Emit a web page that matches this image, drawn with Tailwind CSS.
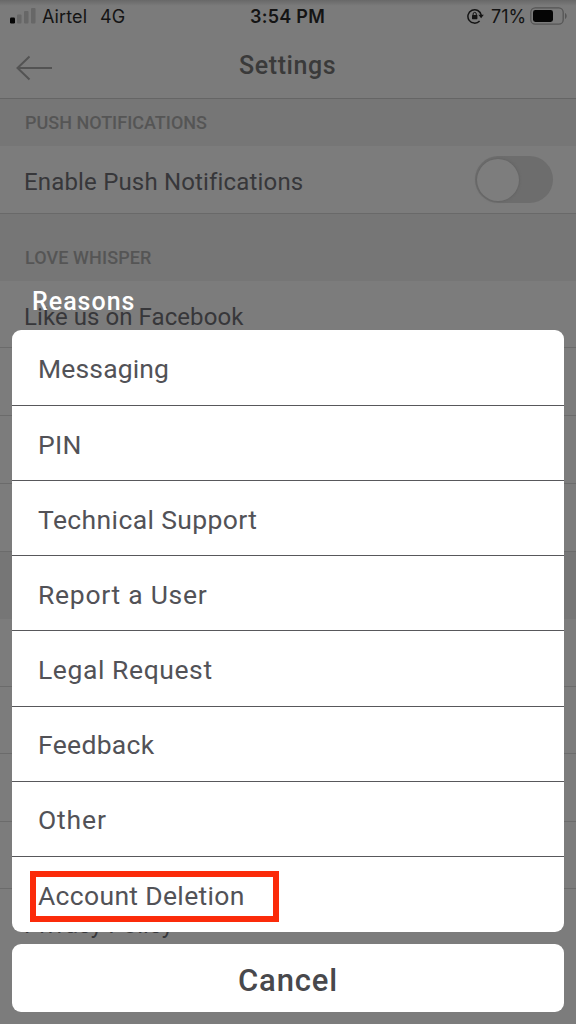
<!DOCTYPE html>
<html lang="en">
<head>
<meta charset="utf-8">
<meta name="viewport" content="width=device-width">
<title>Settings</title>
<script src="https://cdn.jsdelivr.net/npm/@tailwindcss/browser@4"></script>
</head>
<body class="overflow-hidden bg-[#7c7c7c]">
<div class="relative h-[1024px] w-[576px] overflow-hidden bg-[#7c7c7c] font-['Roboto',sans-serif] text-[#37373a]">
  <!-- Settings screen, dimmed -->
  <header class="h-[99px] border-b border-[#656565] bg-linear-to-b from-[#686868] to-[#7b7b7b] to-6%">
    <div class="flex h-8 items-center pl-[10px] pr-[9px] font-['Inter',sans-serif] text-[#141414]">
      <div class="flex w-[240px] items-center">
        <svg class="h-4 w-[26px]" viewBox="0 0 26 16"><rect x="0" y="9.500" width="5" height="6" rx="1.2" fill="#050505"/><g fill="#676767"><rect x="7" y="6.500" width="4.500" height="9" rx="1"/><rect x="14" y="3" width="4.500" height="12.500" rx="1"/><rect x="21" y="0" width="4.500" height="15.500" rx="1"/></g></svg>
        <span class="ml-[6px] text-[18px] tracking-[0.1px]">Airtel</span><span class="ml-[13px] text-[18px]">4G</span>
      </div>
      <span class="text-[18px] font-semibold tracking-[0.25px]">3:54 PM</span>
      <div class="ml-auto flex items-center">
        <svg class="h-4 w-[17px]" viewBox="0 0 17 16" fill="none"><path d="M12.600 12.900A6.700 6.700 0 1 1 14.200 7.200" stroke="#141414" stroke-width="1.500"/><path d="M11.400 6.700h5.400l-2.700 3.600z" fill="#141414"/><rect x="5" y="7" width="5.400" height="4.200" rx=".6" fill="#141414"/><path d="M6.100 7.400V6a1.600 1.600 0 0 1 3.200 0v1.400" stroke="#141414" stroke-width="1"/></svg>
        <span class="ml-[7px] text-[18px] tracking-[-0.1px]">71%</span>
        <svg class="ml-[4px] h-[18px] w-[37px]" viewBox="0 0 37 18" fill="none"><rect x=".8" y=".8" width="32.400" height="16.400" rx="4.500" stroke="#555" stroke-width="1.300"/><rect x="3" y="3" width="20" height="12" rx="2.400" fill="#050505"/><path d="M35 6c2.200.8 2.200 5.200 0 6z" fill="#555"/></svg>
      </div>
    </div>
    <div class="flex h-[66px] items-center pl-4">
      <svg class="mt-[5px] h-[26px] w-9" viewBox="0 0 36 26" fill="none" stroke="#535353" stroke-width="2"><path d="M36 13H1.500M13.500 1.500 1.500 13l12 11.500"/></svg>
      <h1 class="ml-[187px] pt-[2px] text-[25px] leading-8 font-medium tracking-[0.6px] text-[#3a3a3a]">Settings</h1>
    </div>
  </header>
  <h2 class="flex h-[47px] items-center bg-[#767676] pl-[25px] text-[18px] font-medium text-[#555]">PUSH NOTIFICATIONS</h2>
  <div class="flex h-[68px] items-center justify-between border-b border-[#696969] pr-[23px] pl-6">
    <span class="pt-[5px] text-[24px] tracking-[0.17px]">Enable Push Notifications</span>
    <div class="flex h-[47px] w-[78px] items-center rounded-full bg-[#6d6d6d] pl-[2px]"><div class="size-[42px] rounded-full bg-[#7d7d7d] shadow-[0_0_3px_#5c5c5c]"></div></div>
  </div>
  <h2 class="flex h-[67px] items-center bg-[#767676] pt-[19px] pl-[25px] text-[18px] font-medium tracking-[0.1px] text-[#555]">LOVE WHISPER</h2>
  <div class="flex h-[67px] items-center border-b border-[#6b6b6b] pt-[6px] pl-6 text-[24px] tracking-[0.07px]">Like us on Facebook</div>
  <div class="h-[68px] border-b border-[#6b6b6b]"></div>
  <div class="h-[68px] border-b border-[#6b6b6b]"></div>
  <div class="h-[68px] border-b border-[#6b6b6b]"></div>
  <div class="h-[67px] bg-[#767676]"></div>
  <div class="h-[68px] border-b border-[#6b6b6b]"></div>
  <div class="h-[67px] border-b border-[#6b6b6b]"></div>
  <div class="h-[68px] border-b border-[#6b6b6b]"></div>
  <div class="h-[67px] border-b border-[#6b6b6b]"></div>
  <div class="flex h-[67px] items-center pt-1 pl-6 text-[24px] tracking-[0.1px]">Privacy Policy</div>

  <!-- Action sheet -->
  <div class="absolute inset-0 flex flex-col px-3 pt-[285px]">
    <h3 class="h-[45px] pl-5 pt-px text-[25px] leading-[32px] font-medium tracking-[1px] text-white">Reasons</h3>
    <ul class="h-[602px] rounded-[9px] bg-white pt-[0.600px] text-[26.500px] text-[#525257]">
      <li class="flex h-[75.200px] items-center border-b border-[#58585b] pt-[3px] pl-[26px] tracking-[0.15px]">Messaging</li>
      <li class="flex h-[75.200px] items-center border-b border-[#58585b] pt-[3px] pl-[26px] tracking-[0.3px]">PIN</li>
      <li class="flex h-[75.200px] items-center border-b border-[#58585b] pt-[3px] pl-[26px] tracking-[0.38px]">Technical Support</li>
      <li class="flex h-[75.200px] items-center border-b border-[#58585b] pt-[3px] pl-[26px] tracking-[0.72px]">Report a User</li>
      <li class="flex h-[75.200px] items-center border-b border-[#58585b] pt-[3px] pl-[26px] tracking-[0.58px]">Legal Request</li>
      <li class="flex h-[75.200px] items-center border-b border-[#58585b] pt-[3px] pl-[26px] tracking-[0.300px]">Feedback</li>
      <li class="flex h-[75.200px] items-center border-b border-[#58585b] pt-[3px] pl-[26px] tracking-[0.85px]">Other</li>
      <li class="flex h-[75.200px] items-center pt-[3px] pl-[18px]"><span class="flex h-[51px] w-[249px] items-center border-[6px] border-[#fb2b0a] pl-[2px] tracking-[0.33px]">Account Deletion</span></li>
    </ul>
    <button class="mt-3 h-[68px] rounded-[9px] bg-white pt-[7px] text-[31px] font-medium tracking-[0.85px] text-[#48484c]">Cancel</button>
  </div>
</div>
</body>
</html>
